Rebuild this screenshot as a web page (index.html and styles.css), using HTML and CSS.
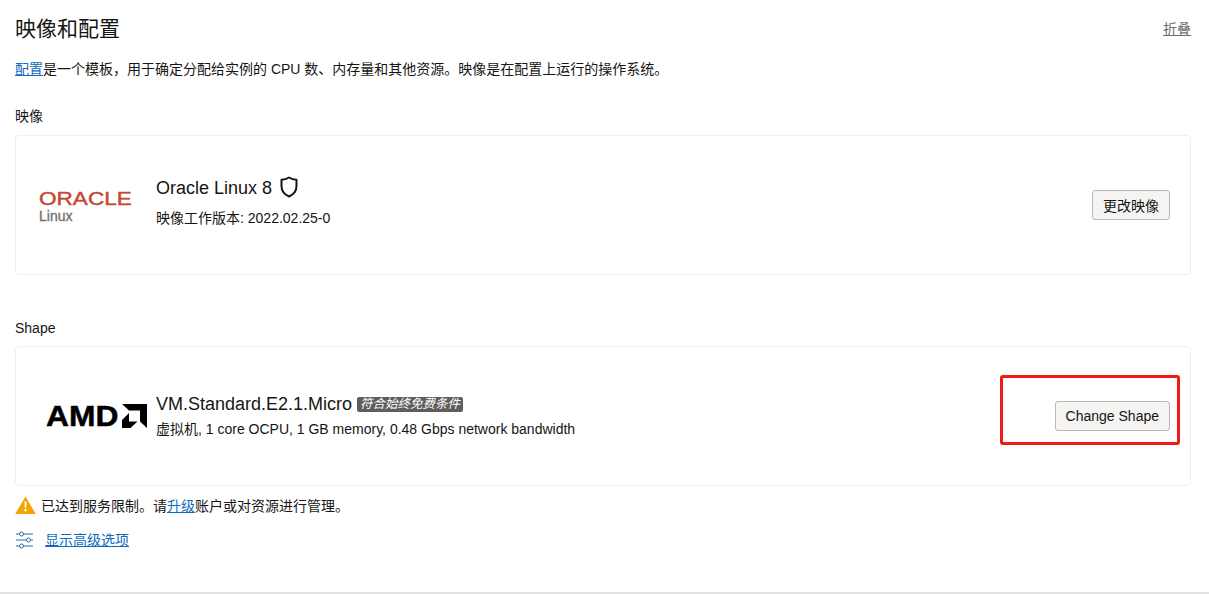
FILE: index.html
```html
<!DOCTYPE html>
<html lang="zh">
<head>
<meta charset="utf-8">
<title>映像和配置</title>
<link rel="stylesheet" href="styles.css">
</head>
<body>
<main class="page">
  <header class="head">
    <h1 class="title">映像和配置</h1>
    <a class="collapse" href="#">折叠</a>
  </header>
  <p class="intro"><a class="link" href="#">配置</a>是一个模板，用于确定分配给实例的 CPU 数、内存量和其他资源。映像是在配置上运行的操作系统。</p>

  <h2 class="label label-image">映像</h2>
  <section class="card">
    <div class="logo logo-oracle">
      <span class="oracle-word">ORACLE</span>
      <span class="oracle-sub">Linux</span>
    </div>
    <div class="info info-image">
      <div class="name">Oracle Linux 8
        <svg class="shield" width="20" height="22" viewBox="0 0 20 22"><path d="M10 1.500 C12.500 3 14.800 3.600 17.500 3.800 V10 C17.500 15 14.500 18.500 10 20.500 C5.500 18.500 2.500 15 2.500 10 V3.800 C5.200 3.600 7.500 3 10 1.500 Z" fill="none" stroke="#161513" stroke-width="2" stroke-linejoin="round"/></svg>
      </div>
      <div class="desc">映像工作版本: 2022.02.25-0</div>
    </div>
    <button class="btn" type="button">更改映像</button>
  </section>

  <h2 class="label label-shape">Shape</h2>
  <section class="card card-shape">
    <div class="logo logo-amd">
      <span class="amd-word">AMD</span>
      <svg class="amd-mark" width="25" height="24" viewBox="0 0 25 24"><path d="M0 0H25V24L18 17.500V6.500H7Z M7 9V17.500H15.500L8.500 24H0V16Z" fill="#000"/></svg>
    </div>
    <div class="info info-shape">
      <div class="name">VM.Standard.E2.1.Micro <span class="badge">符合始终免费条件</span></div>
      <div class="desc">虚拟机, 1 core OCPU, 1 GB memory, 0.48 Gbps network bandwidth</div>
    </div>
    <button class="btn btn-shape" type="button">Change Shape</button>
    <div class="highlight"></div>
  </section>

  <div class="warn">
    <svg class="warn-icon" width="21" height="18" viewBox="0 0 21 18"><path d="M10.500 0.500 L20.800 18 H0.200 Z" fill="#f5a300"/><path d="M9.400 5.500H11.600L11.200 12H9.800Z M9.400 13H11.600V15.200H9.400Z" fill="#fff"/></svg>
    <span>已达到服务限制。请<a class="link" href="#">升级</a>账户或对资源进行管理。</span>
  </div>

  <div class="advanced">
    <svg class="sliders" width="18" height="18" viewBox="0 0 18 18" fill="none" stroke="#2b6a9c" stroke-width="1"><path d="M0 3H3M8 3H17M0 9H10M15 9H17M0 15H3M8 15H17"/><circle cx="5.500" cy="3" r="2"/><circle cx="12.500" cy="9" r="2"/><circle cx="5.500" cy="15" r="2"/></svg>
    <a class="link" href="#">显示高级选项</a>
  </div>
  <hr class="rule">
</main>
</body>
</html>
```
FILE: styles.css
```css
* { box-sizing: border-box; }
html, body { margin: 0; padding: 0; background: #fff; }
body {
  font-family: "Liberation Sans", "Noto Sans CJK SC", sans-serif;
  font-size: 14px;
  color: #161513;
  overflow: hidden;
}
.page { width: 1209px; height: 594px; padding: 0 18px 0 15px; }
.head { display: flex; justify-content: space-between; align-items: center; height: 59px; padding-bottom: 2px; }
.title { margin: 0; font-size: 21px; line-height: 30px; font-weight: 400; }
.collapse { font-size: 14px; color: #6f6e6c; margin-bottom: 2px; }
.intro { margin: 0; height: 20px; line-height: 20px; font-size: 14px; }
.link { color: #0f6cbd; text-decoration: underline; }
.label { margin: 0; font-weight: 400; font-size: 14px; line-height: 20px; }
.label-image { margin-top: 27px; margin-bottom: 9px; }
.label-shape { margin-top: 43px; margin-bottom: 8px; }
.card {
  position: relative;
  display: flex;
  align-items: center;
  height: 140px;
  border: 1px solid #f1efed;
  border-radius: 4px;
  padding-right: 20px;
}
.logo { width: 140px; flex: none; }
.logo-oracle { display: flex; flex-direction: column; padding: 3px 0 0 23px; }
.oracle-word {
  font-size: 17.500px; line-height: 17px;
  color: #c74634;
  -webkit-text-stroke: 0.4px #c74634;
  transform: scaleX(1.29);
  transform-origin: left center;
}
.oracle-sub { font-size: 14px; line-height: 14px; color: #6f6e6c; -webkit-text-stroke: 0.3px #6f6e6c; margin-top: 1px; }
.logo-amd { display: flex; align-items: center; padding-left: 30px; }
.amd-word {
  width: 76px;
  font-size: 30px; line-height: 26px; font-weight: 700; color: #000;
  -webkit-text-stroke: 0.5px #000;
  transform: scaleX(1.06);
  transform-origin: left center;
}
.info { flex: 1; }
.info-image { padding-bottom: 6px; }
.name { display: flex; align-items: center; font-size: 18px; line-height: 24px; gap: 6px; }
.desc { font-size: 14px; line-height: 20px; margin-top: 8px; }
.info-shape { padding-bottom: 1px; }
.info-shape .desc { margin-top: 3px; }
.shield { display: block; margin-left: 1px; margin-top: -2px; }
.badge {
  display: inline-block;
  background: #5f5e5c;
  color: #fff;
  font-size: 12.500px;
  line-height: 15px;
  font-style: italic;
  font-weight: 400;
  padding: 0 3px;
  border-radius: 2px;
  margin-top: 1px;
  margin-left: -1px;
}
.btn {
  font: inherit;
  font-size: 14px;
  height: 30px;
  padding: 0 10px;
  color: #161513;
  background: #f5f4f2;
  border: 1px solid #b9b8b6;
  border-radius: 3px;
}
.btn-shape { align-self: flex-end; margin-bottom: 54px; }
.highlight {
  position: absolute;
  left: 984px; top: 28px;
  width: 180px; height: 70px;
  border: 3px solid #ee1c14;
  border-radius: 3px;
}
.warn { display: flex; align-items: center; gap: 5px; height: 20px; margin-top: 9px; }
.warn-icon { display: block; flex: none; }
.advanced { display: flex; align-items: center; gap: 11px; height: 20px; margin-top: 14px; padding-left: 1px; }
.sliders { display: block; flex: none; margin-top: 2px; }
.rule { margin: 43px -18px 0 -15px; border: 0; border-top: 2px solid #e4e2e0; }
```
